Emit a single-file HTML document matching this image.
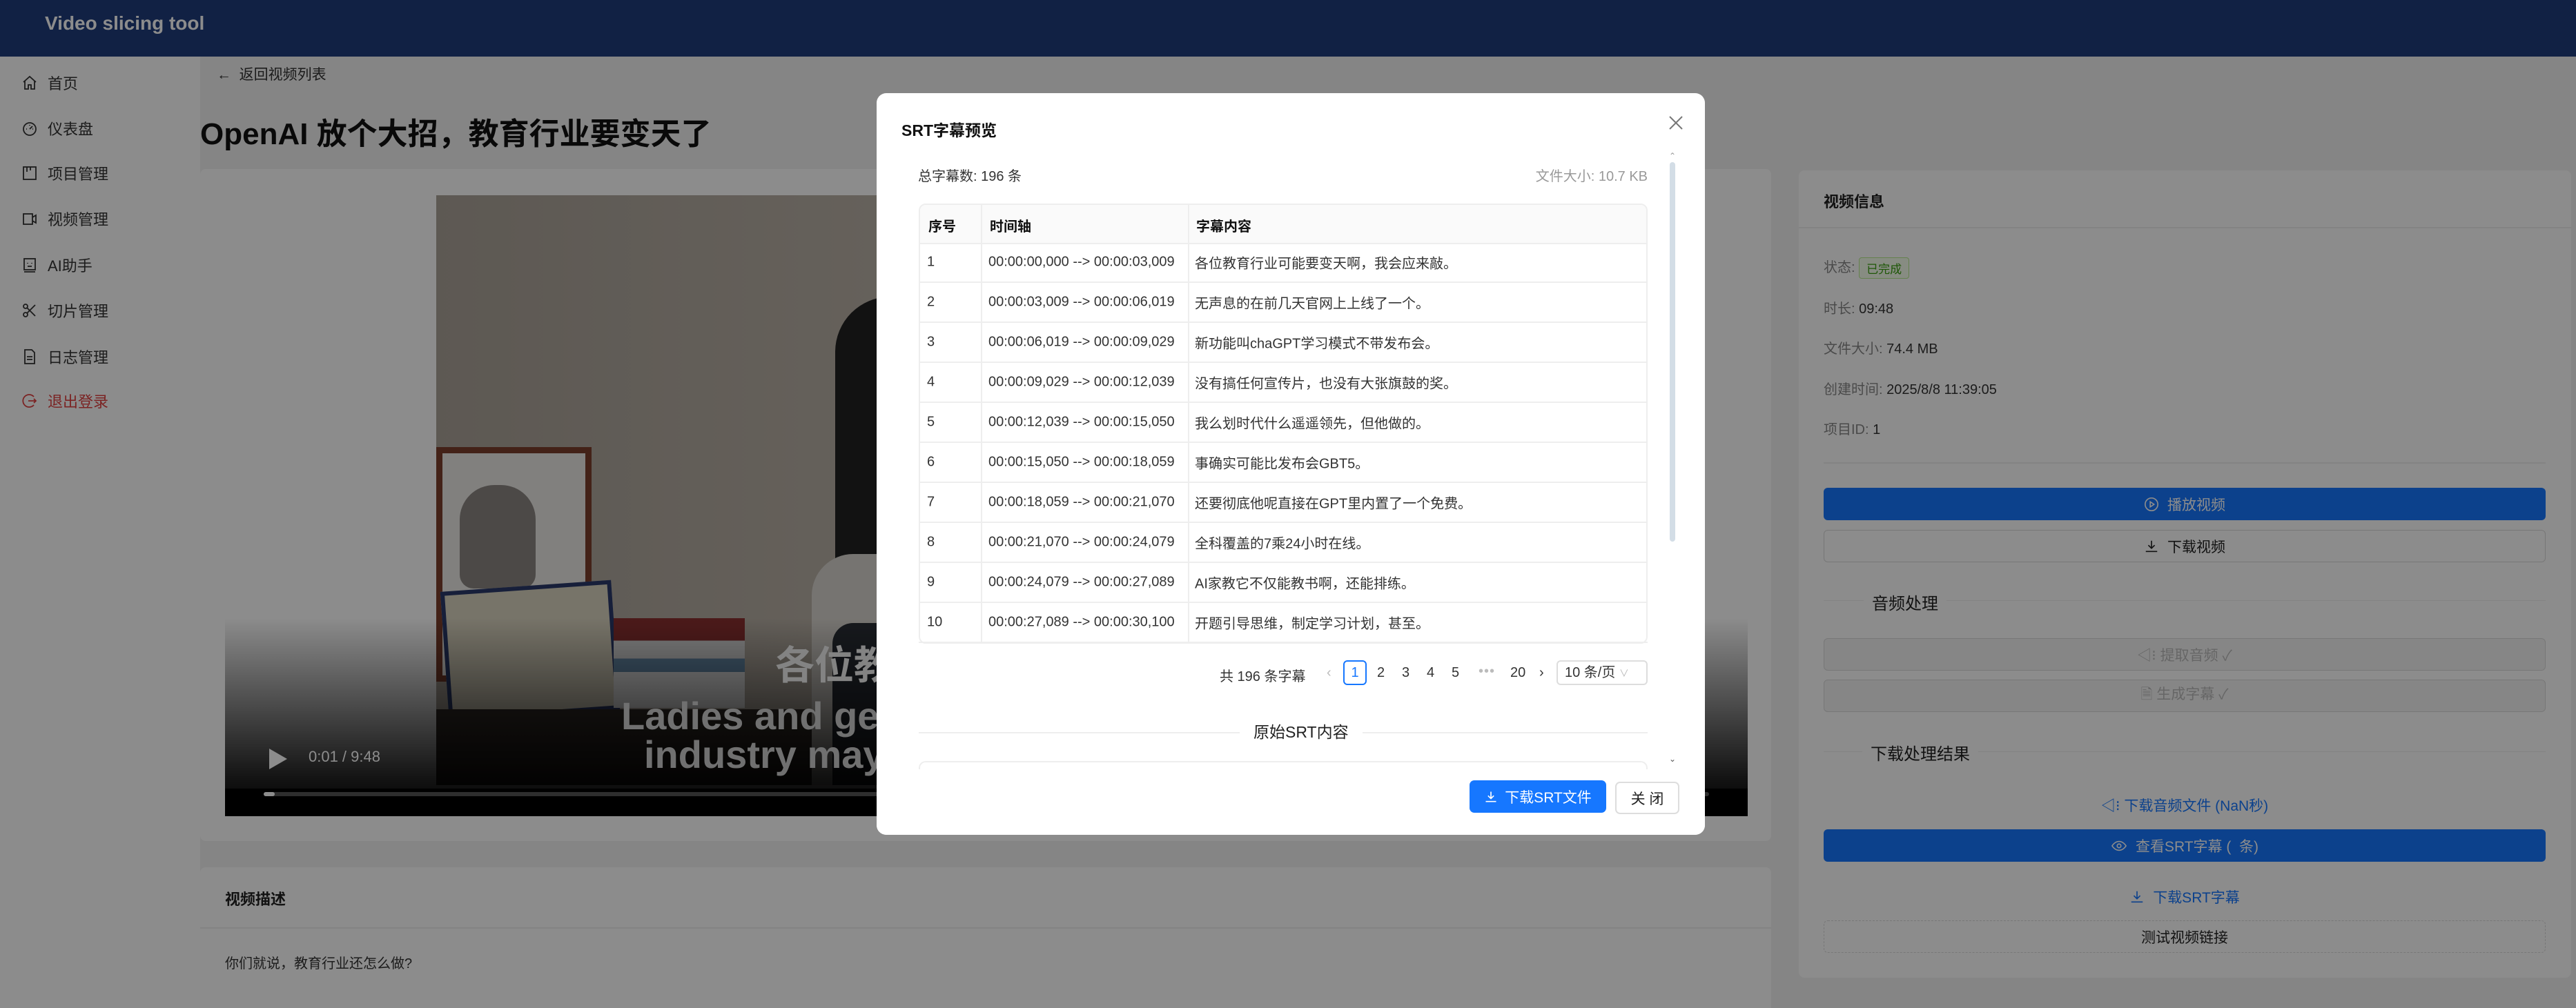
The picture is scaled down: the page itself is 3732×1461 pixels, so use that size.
<!DOCTYPE html>
<html><head><meta charset="utf-8">
<style>
*{box-sizing:border-box;margin:0;padding:0}
html{width:3732px;height:1461px;overflow:hidden}
body{width:3732px;height:1461px;overflow:hidden;position:relative;background:#f2f2f2;font-family:"Liberation Sans","Noto Sans CJK SC",sans-serif;color:#222}
.a{position:absolute;white-space:nowrap}
.hdr{left:0;top:0;width:3732px;height:82px;background:#1f3d7c}
.side{left:0;top:82px;width:290px;height:1379px;background:#fff}
.mi{font-size:22px;color:#333;display:flex;align-items:center;gap:14px;left:31px}
.mi svg{width:24px;height:24px}
.card{background:#fff;border-radius:8px}
.ov{left:0;top:0;width:3732px;height:1461px;background:rgba(0,0,0,.45)}
.modal{left:1270px;top:135px;width:1200px;height:1075px;background:#fff;border-radius:14px;overflow:hidden}
.tb{font-size:20px;color:#333}
.row{position:absolute;left:61px;width:1056px;height:58px;border-bottom:2px solid #eee}
.row span{position:absolute;top:50%;transform:translateY(-50%)}
.lbl{font-size:20px;color:#888}
.lbl b{font-weight:normal;color:#333}
.btn{position:absolute;left:2642px;width:1046px;height:47px;border-radius:6px;display:flex;align-items:center;justify-content:center;gap:12px;font-size:21px}
</style></head><body>
<div class="a hdr"></div>
<div class="a" style="left:65px;top:18px;font-size:28px;font-weight:bold;color:#fff">Video slicing tool</div>
<div class="a side"></div>
<div class="a mi" style="top:104px"><svg viewBox="0 0 24 24" fill="none" stroke="#333" stroke-width="1.8"><path d="M3 11l9-8 9 8M5 9v12h5v-6h4v6h5V9"/></svg>首页</div>
<div class="a mi" style="top:170px"><svg viewBox="0 0 24 24" fill="none" stroke="#333" stroke-width="1.8"><circle cx="12" cy="13" r="9"/><path d="M12 13l4-4M7 13h1M16 13h1M12 7v1"/></svg>仪表盘</div>
<div class="a mi" style="top:235px"><svg viewBox="0 0 24 24" fill="none" stroke="#333" stroke-width="1.8"><rect x="3" y="3" width="18" height="18"/><path d="M8 3v7M13 3v5"/></svg>项目管理</div>
<div class="a mi" style="top:301px"><svg viewBox="0 0 24 24" fill="none" stroke="#333" stroke-width="1.8"><rect x="3" y="5" width="13" height="15"/><path d="M16 10l5-3v11l-5-3"/></svg>视频管理</div>
<div class="a mi" style="top:368px"><svg viewBox="0 0 24 24" fill="none" stroke="#333" stroke-width="1.8"><rect x="4" y="3" width="16" height="16"/><path d="M9 9v1M15 9v1M9 14h6M4 22h16"/></svg>AI助手</div>
<div class="a mi" style="top:434px"><svg viewBox="0 0 24 24" fill="none" stroke="#333" stroke-width="1.8"><circle cx="6" cy="6" r="3"/><circle cx="6" cy="18" r="3"/><path d="M8 8l12 12M8 16L20 4"/></svg>切片管理</div>
<div class="a mi" style="top:501px"><svg viewBox="0 0 24 24" fill="none" stroke="#333" stroke-width="1.8"><path d="M5 2h10l4 4v16H5zM8 12h8M8 16h8"/></svg>日志管理</div>
<div class="a mi" style="top:565px;color:#e04040"><svg viewBox="0 0 24 24" fill="none" stroke="#e04040" stroke-width="1.8"><path d="M18 6a9 9 0 1 0 0 12M10 12h11M18 9l3 3-3 3"/></svg>退出登录</div>

<div class="a" style="left:314px;top:92px;font-size:21px;color:#333">←&nbsp; 返回视频列表</div>
<div class="a" style="left:290px;top:158px;font-size:44px;font-weight:bold;color:#111">OpenAI 放个大招，教育行业要变天了</div>

<div class="a card" style="left:290px;top:245px;width:2276px;height:974px"></div>
<div class="a" style="left:326px;top:283px;width:2206px;height:900px;background:#fff;overflow:hidden">
  <div class="a" style="left:306px;top:0;width:1598px;height:855px;background:linear-gradient(90deg,#aaa298,#bdb5aa 50%,#d2cbbf)"></div>
  <div class="a" style="left:306px;top:365px;width:225px;height:340px;border:9px solid #7a3e2c;background:#eceae6"></div>
  <div class="a" style="left:340px;top:420px;width:110px;height:150px;background:#8a8682;border-radius:50px 50px 20px 20px"></div>
  <div class="a" style="left:318px;top:566px;width:248px;height:188px;background:#d9d3bf;border:6px solid #2a3a6a;transform:rotate(-4deg)"></div>
  <div class="a" style="left:563px;top:613px;width:190px;height:130px;background:linear-gradient(#8a3030 0 25%,#ddd 25% 45%,#6a90b0 45% 60%,#eee 60%)"></div>
  <div class="a" style="left:306px;top:745px;width:700px;height:110px;background:#3a322c"></div>
  <div class="a" style="left:884px;top:147px;width:120px;height:420px;background:#222;border-radius:80px 0 0 40px"></div>
  <div class="a" style="left:850px;top:520px;width:120px;height:335px;background:#d8d4ce;border-radius:60px 0 0 0"></div>
  <div class="a" style="left:880px;top:620px;width:124px;height:235px;background:#2a2e36;border-radius:30px 0 0 0"></div>
  <div class="a" style="left:0;top:613px;width:2206px;height:287px;background:linear-gradient(rgba(0,0,0,0),rgba(0,0,0,.85) 80%,#000)"></div>
  <div class="a" style="left:0;top:860px;width:2206px;height:40px;background:#000"></div>
  <div class="a" style="left:797px;top:636px;font-size:57px;font-weight:bold;color:#eee">各位教育行业可能要变天啊</div>
  <div class="a" style="left:574px;top:722px;font-size:56px;font-weight:bold;color:#ccc">Ladies and gentlemen, the education</div>
  <div class="a" style="left:607px;top:778px;font-size:56px;font-weight:bold;color:#ccc">industry may change</div>
  <svg class="a" style="left:62px;top:800px" width="30" height="34" viewBox="0 0 30 34"><path d="M2 2l26 15L2 32z" fill="#fff"/></svg>
  <div class="a" style="left:121px;top:801px;font-size:22px;color:#fff">0:01 / 9:48</div>
  <div class="a" style="left:56px;top:865px;width:2094px;height:6px;background:#555;border-radius:3px"></div>
  <div class="a" style="left:56px;top:865px;width:16px;height:6px;background:#fff;border-radius:3px"></div>
</div>

<div class="a card" style="left:290px;top:1257px;width:2276px;height:204px;border-radius:8px 8px 0 0"></div>
<div class="a" style="left:326px;top:1286px;font-size:22px;font-weight:bold">视频描述</div>
<div class="a" style="left:290px;top:1344px;width:2276px;height:2px;background:#eee"></div>
<div class="a" style="left:326px;top:1380px;font-size:20px;color:#333">你们就说，教育行业还怎么做?</div>

<div class="a card" style="left:2606px;top:247px;width:1119px;height:1170px"></div>
<div class="a" style="left:2642px;top:275px;font-size:22px;font-weight:bold">视频信息</div>
<div class="a" style="left:2606px;top:329px;width:1119px;height:2px;background:#eee"></div>
<div class="a lbl" style="left:2642px;top:371px">状态: <span style="display:inline-block;font-size:17px;color:#389e0d;background:#f6ffed;border:1.5px solid #b7eb8f;border-radius:4px;padding:2px 10px;vertical-align:middle">已完成</span></div>
<div class="a lbl" style="left:2642px;top:431px">时长: <b>09:48</b></div>
<div class="a lbl" style="left:2642px;top:489px">文件大小: <b>74.4 MB</b></div>
<div class="a lbl" style="left:2642px;top:548px">创建时间: <b>2025/8/8 11:39:05</b></div>
<div class="a lbl" style="left:2642px;top:606px">项目ID: <b>1</b></div>
<div class="a" style="left:2642px;top:670px;width:1046px;height:1.5px;background:#eee"></div>
<div class="btn" style="top:707px;background:#1677ff;color:#fff"><svg width="22" height="22" viewBox="0 0 24 24" fill="none" stroke="#fff" stroke-width="1.8"><circle cx="12" cy="12" r="10"/><path d="M10 8l6 4-6 4z"/></svg>播放视频</div>
<div class="btn" style="top:768px;background:#fff;border:1.5px solid #d9d9d9;color:#222"><svg width="22" height="22" viewBox="0 0 24 24" fill="none" stroke="#222" stroke-width="1.8"><path d="M12 3v12M7 10l5 5 5-5M3 20h18"/></svg>下载视频</div>
<div class="a" style="left:2642px;top:870px;width:1046px;height:1px;background:#eee"></div>
<div class="a" style="left:2700px;top:855px;padding:0 12px;background:#fff;font-size:24px">音频处理</div>
<div class="btn" style="top:925px;background:#f5f5f5;border:1.5px solid #d9d9d9;color:#bbb">◁⁝ 提取音频 ✓</div>
<div class="btn" style="top:985px;background:#f5f5f5;border:1.5px solid #d9d9d9;color:#bbb">🗎 生成字幕 ✓</div>
<div class="a" style="left:2642px;top:1089px;width:1046px;height:1px;background:#eee"></div>
<div class="a" style="left:2698px;top:1073px;padding:0 12px;background:#fff;font-size:24px">下载处理结果</div>
<div class="btn" style="top:1143px;color:#1677ff">◁⁝ 下载音频文件 (NaN秒)</div>
<div class="btn" style="top:1202px;background:#1677ff;color:#fff"><svg width="24" height="22" viewBox="0 0 24 24" fill="none" stroke="#fff" stroke-width="1.8"><path d="M1 12s4-7 11-7 11 7 11 7-4 7-11 7S1 12 1 12z"/><circle cx="12" cy="12" r="3"/></svg>查看SRT字幕 (&nbsp; 条)</div>
<div class="btn" style="top:1276px;color:#1677ff"><svg width="22" height="22" viewBox="0 0 24 24" fill="none" stroke="#1677ff" stroke-width="1.8"><path d="M12 3v12M7 10l5 5 5-5M3 20h18"/></svg>下载SRT字幕</div>
<div class="btn" style="top:1334px;background:#fff;border:1.5px dashed #d9d9d9;color:#222">测试视频链接</div>

<div class="a ov"></div>

<div class="a modal">
  <div class="a" style="left:36px;top:35px;font-size:23px;font-weight:bold;color:#111">SRT字幕预览</div>
  <svg class="a" style="left:1147px;top:32px" width="22" height="22" viewBox="0 0 22 22" stroke="#777" stroke-width="2"><path d="M2 2l18 18M20 2L2 20"/></svg>
  <div class="a tb" style="left:60px;top:104px">总字幕数: 196 条</div>
  <div class="a tb" style="left:935px;top:104px;width:182px;text-align:right;color:#999">文件大小: 10.7 KB</div>
  <div class="a" style="left:1149px;top:100px;width:8px;height:550px;background:#d3dde6;border-radius:4px"></div>
  <div class="a" style="left:1148px;top:84px;font-size:12px;color:#999">⌃</div>
  <div class="a" style="left:1148px;top:958px;font-size:12px;color:#555">⌄</div>
  <div class="a" style="left:61px;top:160px;width:1056px;height:638px;border:2px solid #eee;border-radius:10px;overflow:hidden">
    <div class="a" style="left:0;top:0;width:1056px;height:57px;background:#fafafa;border-bottom:2px solid #eee"></div>
    <div class="a" style="left:88px;top:0;width:2px;height:640px;background:#eee"></div>
    <div class="a" style="left:388px;top:0;width:2px;height:640px;background:#eee"></div>
    <div class="a tb" style="left:12px;top:15px;font-weight:bold;color:#111">序号</div>
    <div class="a tb" style="left:101px;top:15px;font-weight:bold;color:#111">时间轴</div>
    <div class="a tb" style="left:400px;top:15px;font-weight:bold;color:#111">字幕内容</div>
  </div>
  <div style="position:absolute;left:0;top:217px" class="tb">
    <div class="row" style="top:0"><span style="left:12px">1</span><span style="left:101px">00:00:00,000 --&gt; 00:00:03,009</span><span style="left:400px">各位教育行业可能要变天啊，我会应来敲。</span></div>
    <div class="row" style="top:58px"><span style="left:12px">2</span><span style="left:101px">00:00:03,009 --&gt; 00:00:06,019</span><span style="left:400px">无声息的在前几天官网上上线了一个。</span></div>
    <div class="row" style="top:116px"><span style="left:12px">3</span><span style="left:101px">00:00:06,019 --&gt; 00:00:09,029</span><span style="left:400px">新功能叫chaGPT学习模式不带发布会。</span></div>
    <div class="row" style="top:174px"><span style="left:12px">4</span><span style="left:101px">00:00:09,029 --&gt; 00:00:12,039</span><span style="left:400px">没有搞任何宣传片，也没有大张旗鼓的奖。</span></div>
    <div class="row" style="top:232px"><span style="left:12px">5</span><span style="left:101px">00:00:12,039 --&gt; 00:00:15,050</span><span style="left:400px">我么划时代什么遥遥领先，但他做的。</span></div>
    <div class="row" style="top:290px"><span style="left:12px">6</span><span style="left:101px">00:00:15,050 --&gt; 00:00:18,059</span><span style="left:400px">事确实可能比发布会GBT5。</span></div>
    <div class="row" style="top:348px"><span style="left:12px">7</span><span style="left:101px">00:00:18,059 --&gt; 00:00:21,070</span><span style="left:400px">还要彻底他呢直接在GPT里内置了一个免费。</span></div>
    <div class="row" style="top:406px"><span style="left:12px">8</span><span style="left:101px">00:00:21,070 --&gt; 00:00:24,079</span><span style="left:400px">全科覆盖的7乘24小时在线。</span></div>
    <div class="row" style="top:464px"><span style="left:12px">9</span><span style="left:101px">00:00:24,079 --&gt; 00:00:27,089</span><span style="left:400px">AI家教它不仅能教书啊，还能排练。</span></div>
    <div class="row" style="top:522px"><span style="left:12px">10</span><span style="left:101px">00:00:27,089 --&gt; 00:00:30,100</span><span style="left:400px">开题引导思维，制定学习计划，甚至。</span></div>
  </div>
  <div class="a tb" style="left:497px;top:829px">共 196 条字幕</div>
  <div class="a tb" style="left:652px;top:829px;color:#bbb">‹</div>
  <div class="a tb" style="left:676px;top:822px;width:34px;height:36px;border:2px solid #1677ff;border-radius:6px;color:#1677ff;text-align:center;line-height:32px">1</div>
  <div class="a tb" style="left:725px;top:829px">2</div>
  <div class="a tb" style="left:761px;top:829px">3</div>
  <div class="a tb" style="left:797px;top:829px">4</div>
  <div class="a tb" style="left:833px;top:829px">5</div>
  <div class="a tb" style="left:872px;top:827px;color:#bbb;letter-spacing:1px">•••</div>
  <div class="a tb" style="left:918px;top:829px">20</div>
  <div class="a tb" style="left:960px;top:829px">›</div>
  <div class="a tb" style="left:985px;top:822px;width:132px;height:36px;border:2px solid #ddd;border-radius:6px;padding-left:10px;line-height:32px">10 条/页 <span style="color:#bbb;font-size:14px">∨</span></div>
  <div class="a" style="left:61px;top:926px;width:1056px;height:2px;background:#eee"></div>
  <div class="a" style="left:526px;top:907px;padding:0 20px;background:#fff;font-size:23px;color:#222">原始SRT内容</div>
  <div class="a" style="left:61px;top:968px;width:1056px;height:60px;border:2px solid #eee;border-bottom:none;border-radius:10px 10px 0 0"></div>
  <div class="a" style="left:0;top:980px;width:1200px;height:95px;background:#fff"></div>
  <div class="a" style="left:859px;top:996px;width:198px;height:47px;background:#1677ff;border-radius:7px;color:#fff;font-size:21px;display:flex;align-items:center;justify-content:center;gap:10px"><svg width="20" height="20" viewBox="0 0 24 24" fill="none" stroke="#fff" stroke-width="2"><path d="M12 3v12M7 10l5 5 5-5M3 20h18"/></svg>下载SRT文件</div>
  <div class="a" style="left:1070px;top:998px;width:93px;height:47px;border:2px solid #ddd;border-radius:7px;font-size:21px;display:flex;align-items:center;justify-content:center">关 闭</div>
</div>
</body></html>
